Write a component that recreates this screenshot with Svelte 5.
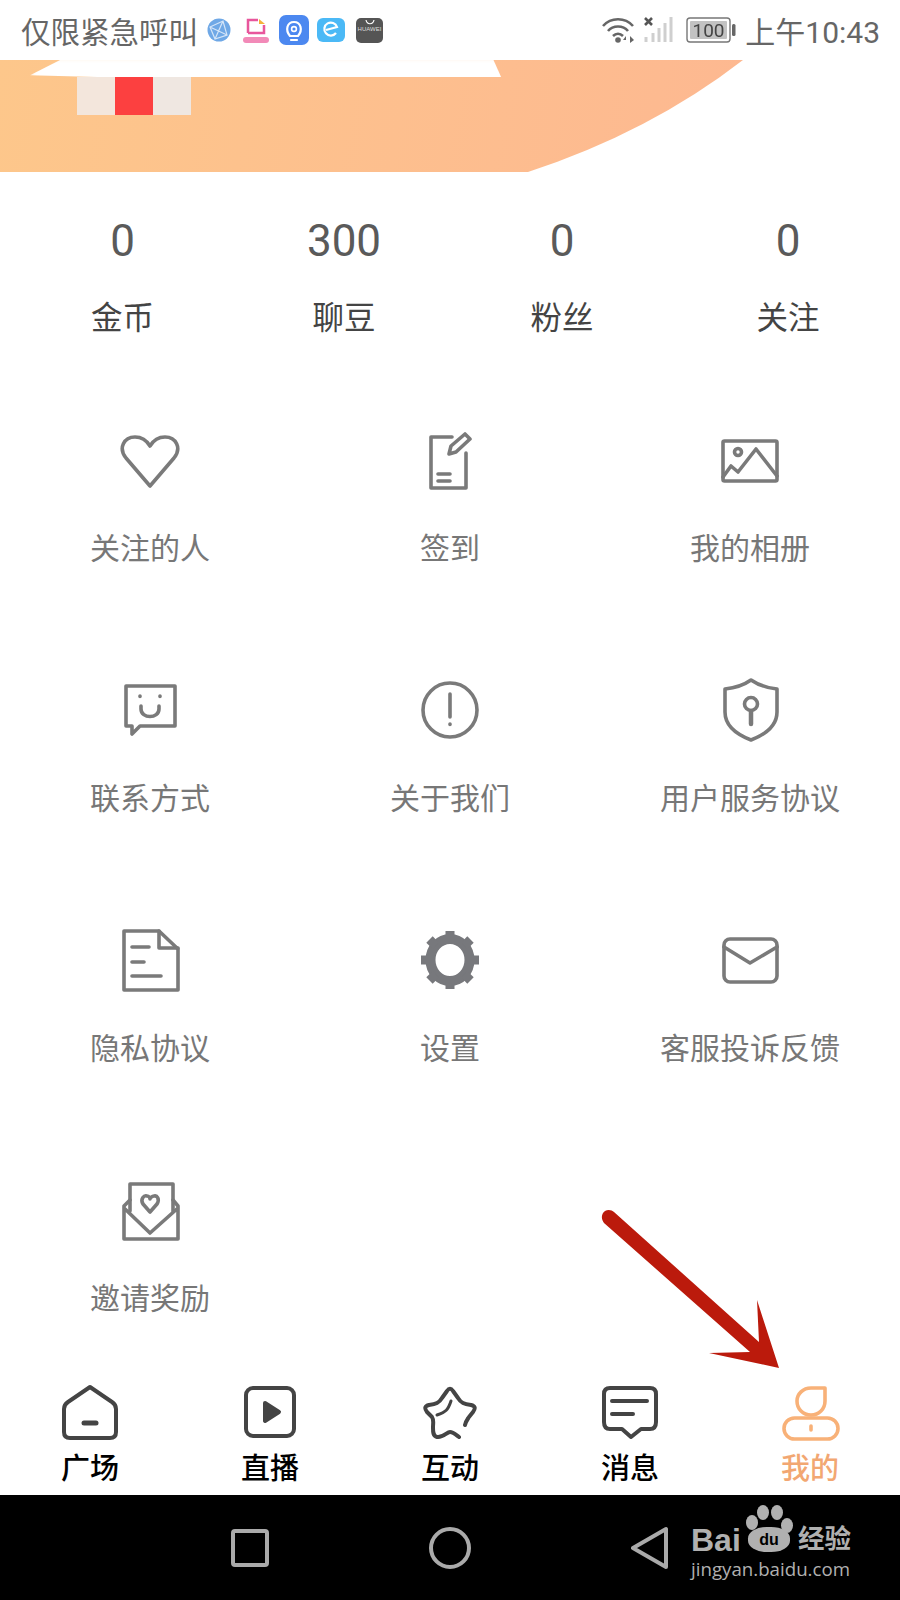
<script lang="ts">
  const stats = [
    { value: '0', label: '金币' },
    { value: '300', label: '聊豆' },
    { value: '0', label: '粉丝' },
    { value: '0', label: '关注' },
  ]
  const gearTeeth = [0, 45, 90, 135, 180, 225, 270, 315]
</script>

<div class="page">
  <header class="status">
    <div class="status-left">
      <span class="carrier">仅限紧急呼叫</span>
      <svg class="app" width="24" height="24" viewBox="0 0 24 24">
        <circle cx="12" cy="12" r="11.5" fill="#6fa8e6" />
        <path d="M3 9 L16 3 L20 17 L8 21 Z M3 9 L20 17 M16 3 L8 21" fill="none" stroke="#d4e5f8" stroke-width="1.2" />
      </svg>
      <svg class="app app-pink" width="28" height="30" viewBox="0 0 28 30">
        <path d="M6 18 V5 H16 M22 10 V18 H6" fill="none" stroke="#e8569c" stroke-width="2.5" />
        <path d="M17 4 L23 9 L17 9 Z" fill="#f5b13c" />
        <rect x="1" y="22" width="26" height="6" rx="3" fill="#f28ab8" />
      </svg>
      <svg class="app" width="30" height="30" viewBox="0 0 30 30">
        <rect width="30" height="30" rx="7" fill="#4c88f0" />
        <path d="M11 21 C6 15 8 7 15 7 C22 7 24 15 19 21 Z M12 25 H18" fill="none" stroke="#fff" stroke-width="2.2" stroke-linecap="round" />
        <circle cx="15" cy="14" r="2.4" fill="none" stroke="#fff" stroke-width="1.6" />
      </svg>
      <svg class="app" width="28" height="24" viewBox="0 0 28 24">
        <rect width="28" height="24" rx="6" fill="#4bb9f6" />
        <path d="M19 15 A6.5 6.5 0 1 1 20 9 L9 12" fill="none" stroke="#fff" stroke-width="2.2" />
      </svg>
      <div class="huawei">
        <svg width="10" height="5" viewBox="0 0 10 5"><path d="M1 0 C2 5 8 5 9 0" fill="none" stroke="#fff" stroke-width="1.2" /></svg>
        <span>HUAWEI</span>
      </div>
    </div>
    <div class="status-right">
      <svg width="34" height="30" viewBox="0 0 34 30">
        <path d="M2 11 C10 2 24 2 32 11 M7 16 C12 10 22 10 27 16 M12 21 C15 18 19 18 22 21" fill="none" stroke="#666" stroke-width="2.6" />
        <circle cx="17" cy="25" r="2.8" fill="#666" />
        <path d="M25 21 L22 25 H25 V28 M29 21 V28 L33 25 Z" fill="#666" />
      </svg>
      <svg class="signal" width="30" height="30" viewBox="0 0 30 30">
        <path d="M2 3 L9 10 M9 3 L2 10" stroke="#555" stroke-width="2.6" />
        <path d="M3 22 V27 M10 18 V27 M16 13 V27 M22 8 V27 M28 2 V27" stroke="#cfcfcf" stroke-width="3" />
      </svg>
      <svg class="battery" width="50" height="26" viewBox="0 0 50 26">
        <rect x="1" y="1" width="43" height="24" rx="3" fill="#fff" stroke="#777" stroke-width="1.4" />
        <rect x="4" y="4" width="37" height="18" rx="1" fill="#c2c2c2" />
        <rect x="46" y="7" width="3.5" height="12" rx="1.5" fill="#666" />
        <text x="22.5" y="20" text-anchor="middle" class="battery-text">100</text>
      </svg>
      <span class="time">上午10:43</span>
    </div>
  </header>

  <div class="banner">
    <div class="banner-strip"></div>
    <div class="banner-avatar">
      <span class="pale-a"></span>
      <span class="red"></span>
      <span class="pale-b"></span>
    </div>
  </div>

  <section class="stats">
    {#each stats as stat}
      <div class="stat">
        <span class="stat-value">{stat.value}</span>
        <span class="stat-label">{stat.label}</span>
      </div>
    {/each}
  </section>

  <section class="menu">
    <div class="cell">
      <svg class="icon" viewBox="0 0 64 64">
        <path d="M32 58 L8 30 C0 20 6 9 17 9 C24 9 29 13 32 18 C35 13 40 9 47 9 C58 9 64 20 56 30 Z" />
      </svg>
      <span>关注的人</span>
    </div>
    <div class="cell">
      <svg class="icon" viewBox="0 0 64 64">
        <path d="M34 9 H13 V60 H48 V25 M20 46 H32 M20 53 H32" />
        <path d="M31 26 L33 18 L47 6 L52 11 L38 24 Z" />
      </svg>
      <span>签到</span>
    </div>
    <div class="cell">
      <svg class="icon" viewBox="0 0 64 64">
        <rect x="5" y="13" width="54" height="40" rx="1.5" />
        <circle cx="20" cy="24" r="3.5" />
        <path d="M5 49 L13 38 L20 44 L38 21 L59 48" />
      </svg>
      <span>我的相册</span>
    </div>

    <div class="cell">
      <svg class="icon" viewBox="0 0 64 64">
        <path d="M8 8 H57 V48 H22 L14 56 V48 H8 Z" />
        <path d="M22 18 V18.5 M42 18 V18.5" />
        <path d="M23 28 V31 C23 41 41 41 41 31 V28" />
      </svg>
      <span>联系方式</span>
    </div>
    <div class="cell">
      <svg class="icon" viewBox="0 0 64 64">
        <circle cx="32" cy="32" r="27" />
        <path d="M32 16 V39 M32 46 V46.5" />
      </svg>
      <span>关于我们</span>
    </div>
    <div class="cell">
      <svg class="icon" viewBox="0 0 64 64">
        <path d="M33 2 C40 7 50 10 59 11 V34 C59 48 46 57 33 62 C20 57 7 48 7 34 V11 C16 10 26 7 33 2 Z" />
        <circle cx="33" cy="26" r="6.5" />
        <path d="M33 33 V46" stroke-width="4.5" />
      </svg>
      <span>用户服务协议</span>
    </div>

    <div class="cell">
      <svg class="icon" viewBox="0 0 64 64">
        <path d="M6 3 H41 L60 21 V62 H6 Z" />
        <path d="M41 3 V20 H60 M14 19 H31 M14 34 H26 M14 48 H43" />
      </svg>
      <span>隐私协议</span>
    </div>
    <div class="cell">
      <svg class="icon gear" viewBox="0 0 64 64">
        <ellipse cx="32" cy="32" rx="19.5" ry="21" />
        {#each gearTeeth as deg}
          <rect x="27.5" y="3" width="9" height="9" transform="rotate({deg} 32 32)" />
        {/each}
      </svg>
      <span>设置</span>
    </div>
    <div class="cell">
      <svg class="icon" viewBox="0 0 64 64">
        <rect x="6" y="11" width="53" height="43" rx="6" />
        <path d="M6 19 L32 35 L59 19" />
      </svg>
      <span>客服投诉反馈</span>
    </div>

    <div class="cell">
      <svg class="icon" viewBox="0 0 64 64">
        <path d="M12 33 V6 H55 V33" />
        <path d="M12 22 L6 28 V61 H60 V28 L55 22 M6 30 L32 55 L60 30" />
        <path d="M32 34 L25 26 C22 21 26 17 29 18 C31 18 32 20 32 21 C32 20 34 18 36 18 C39 17 42 21 39 26 Z" />
      </svg>
      <span>邀请奖励</span>
    </div>
  </section>

  <nav class="tabs">
    <div class="tab">
      <svg class="tab-icon" viewBox="0 0 64 64">
        <path d="M32 7 L54 22 C57 24 58 26 58 29 V52 C58 56 56 58 52 58 H12 C8 58 6 56 6 52 V29 C6 26 7 24 10 22 Z" />
        <path d="M26 43 H38" stroke-width="5" />
      </svg>
      <span>广场</span>
    </div>
    <div class="tab">
      <svg class="tab-icon" viewBox="0 0 64 64">
        <rect x="8" y="8" width="48" height="48" rx="7" />
        <path d="M27 23 L41 32 L27 41 Z" fill="#444" />
      </svg>
      <span>直播</span>
    </div>
    <div class="tab">
      <svg class="tab-icon" viewBox="0 0 64 64">
        <g transform="translate(0 2)">
          <path d="M41 55 C37 52 35 50 32 50 C29 50 25 56 19 55 C15 54 15 50 15 46 C15 40 16 38 14 35 L9 30 C6 26 7 24 11 23 C18 22 21 21 24 16 L29 9 C31 6 33 6 35 9 L40 16 C43 21 46 22 53 23 C57 24 58 26 55 30 L51 35 C49 38 48 39 47 43" />
          <path d="M19 33 C28 30 30 28 33 19" stroke-width="3" />
        </g>
      </svg>
      <span>互动</span>
    </div>
    <div class="tab">
      <svg class="tab-icon" viewBox="0 0 64 64">
        <path d="M12 8 H52 C56 8 58 10 58 14 V42 C58 47 56 49 52 49 H43 L33 57 L24 49 H12 C8 49 6 47 6 42 V14 C6 10 8 8 12 8 Z" />
        <path d="M14 21 H49 M14 34 H35" />
      </svg>
      <span>消息</span>
    </div>
    <div class="tab tab--active">
      <svg class="tab-icon" viewBox="0 0 64 64">
        <path d="M33 8 H47 V21 C47 29 41 35 33 35 C25 35 19 29 19 21 C19 14 25 8 33 8 Z" />
        <rect x="6" y="38" width="54" height="21" rx="10.5" />
        <path d="M33 46 V50" />
      </svg>
      <span>我的</span>
    </div>
  </nav>

  <footer class="navbar">
    <svg width="38" height="38" viewBox="0 0 38 38">
      <rect x="2" y="2" width="34" height="34" rx="2" />
    </svg>
    <svg width="42" height="42" viewBox="0 0 42 42">
      <circle cx="21" cy="21" r="19" />
    </svg>
    <svg width="38" height="44" viewBox="0 0 38 44">
      <path d="M2 22 L35 3 V41 Z" stroke-linejoin="round" />
    </svg>
  </footer>

  <svg class="arrow" width="900" height="1600" viewBox="0 0 900 1600">
    <path
      fill="#bb1a0c"
      d="M604 1223 C601 1219 601 1214 605 1211 C608 1209 612 1210 614 1212 L759 1342 L757 1300 L779 1368 L709 1353 L750 1352 Z"
    />
  </svg>

  <div class="watermark">
    <div class="wm-logo">
      <span class="wm-bai">Bai</span>
      <div class="wm-paw">
        <i class="toe t1"></i>
        <i class="toe t2"></i>
        <i class="toe t3"></i>
        <i class="toe t4"></i>
        <b class="paw-head">du</b>
      </div>
      <span class="wm-cn">经验</span>
    </div>
    <span class="wm-url">jingyan.baidu.com</span>
  </div>
</div>

<style>
  :global(body) {
    margin: 0;
    background: #fff;
  }

  .page {
    position: relative;
    display: flex;
    flex-direction: column;
    width: 900px;
    height: 1600px;
    overflow: hidden;
    background: #fff;
    font-family: Roboto, "Noto Sans CJK SC", sans-serif;
  }

  .status {
    display: flex;
    justify-content: space-between;
    align-items: center;
    height: 60px;
    padding: 0 20px 0 21px;
    box-sizing: border-box;
    color: #666;
  }

  .status-left,
  .status-right {
    display: flex;
    align-items: center;
  }

  .status svg {
    filter: blur(0.5px);
  }

  .carrier {
    width: 176px;
    overflow: hidden;
    white-space: nowrap;
    font-size: 29.5px;
    margin-right: 10px;
  }

  .app {
    margin-right: 8px;
  }

  .app-pink {
    margin-left: 3px;
    margin-right: 9px;
  }

  .huawei {
    display: flex;
    flex-direction: column;
    align-items: center;
    width: 27px;
    height: 25px;
    margin-left: 3px;
    border-radius: 5px;
    background: #555;
    color: #ddd;
    font-size: 6px;
    line-height: 8px;
    padding-top: 2px;
    box-sizing: border-box;
    font-family: "Liberation Sans", sans-serif;
  }

  .signal {
    margin-left: 8px;
  }

  .battery {
    margin-left: 13px;
  }

  .battery-text {
    font-size: 19px;
    fill: #444;
  }

  .time {
    margin-left: 9px;
    font-size: 30px;
  }

  .banner {
    position: relative;
    height: 112px;
    background: linear-gradient(100deg, #fdc78b 0%, #fdb592 100%);
    clip-path: path("M0 0 H743 Q650 72 528 112 H0 Z");
  }

  .banner-strip {
    position: absolute;
    left: 24px;
    top: 0;
    width: 490px;
    height: 17px;
    overflow: hidden;
  }

  .banner-strip::before {
    content: "";
    position: absolute;
    left: 6px;
    top: -4px;
    width: 476px;
    height: 32px;
    background: #fff;
    clip-path: polygon(38px 0, 97% 0, 100% 100%, 0 60%);
    filter: blur(3px);
  }

  .banner-avatar {
    position: absolute;
    left: 77px;
    top: 17px;
    display: flex;
    height: 38px;
  }

  .banner-avatar span {
    width: 38px;
  }

  .pale-a {
    background: #f3e6dc;
  }

  .red {
    background: #fc4040;
  }

  .pale-b {
    background: #efe7e1;
  }

  .stats {
    display: grid;
    grid-template-columns: 245px 198px 238px 214px;
    height: 240px;
    padding-top: 41px;
    box-sizing: border-box;
  }

  .stat {
    display: flex;
    flex-direction: column;
    align-items: center;
    gap: 30px;
  }

  .stat-value {
    font-size: 44px;
    line-height: 56px;
    color: #5a5a5a;
  }

  .stat-label {
    font-size: 31.5px;
    line-height: 40px;
    color: #444;
  }

  .menu {
    display: grid;
    grid-template-columns: repeat(3, 300px);
    grid-auto-rows: 160px;
    row-gap: 90px;
    flex: 1;
    padding-top: 16px;
  }

  .cell {
    display: flex;
    flex-direction: column;
    align-items: center;
    gap: 37px;
    font-size: 30px;
    line-height: 40px;
    color: #777;
  }

  .icon {
    width: 64px;
    height: 64px;
    fill: none;
    stroke: #7a7a7a;
    stroke-width: 3.6;
    stroke-linecap: round;
    stroke-linejoin: round;
    filter: blur(0.5px);
  }

  .gear {
    stroke: none;
    fill: #77787c;
  }

  .gear ellipse {
    fill: none;
    stroke: #77787c;
    stroke-width: 10;
  }

  .tabs {
    display: grid;
    grid-template-columns: repeat(5, 180px);
    height: 115px;
  }

  .tab {
    display: flex;
    flex-direction: column;
    align-items: center;
    gap: 6px;
    font-size: 29px;
    line-height: 38px;
    font-weight: 500;
    color: #000;
  }

  .tab-icon {
    width: 64px;
    height: 64px;
    fill: none;
    stroke: #444;
    stroke-width: 4;
    stroke-linecap: round;
    stroke-linejoin: round;
    filter: blur(0.4px);
  }

  .tab--active {
    color: #f2a772;
  }

  .tab--active .tab-icon {
    stroke: #f8b178;
    stroke-width: 3.6;
  }

  .navbar {
    display: grid;
    grid-template-columns: repeat(3, 200px);
    justify-content: center;
    align-items: center;
    justify-items: center;
    height: 105px;
    background: #000;
    fill: none;
    stroke: #aaa;
    stroke-width: 4;
  }

  .arrow {
    position: absolute;
    left: 0;
    top: 0;
    pointer-events: none;
  }

  .watermark {
    position: absolute;
    left: 691px;
    top: 1503px;
    width: 170px;
    color: #b0b0b0;
  }

  .wm-logo {
    display: flex;
    align-items: flex-end;
    height: 52px;
  }

  .wm-bai {
    width: 50px;
    font-family: "Liberation Sans", sans-serif;
    font-weight: 700;
    font-size: 32px;
    line-height: 30px;
  }

  .wm-paw {
    position: relative;
    width: 57px;
    height: 52px;
  }

  .toe {
    position: absolute;
    background: #b0b0b0;
    border-radius: 50%;
    width: 12px;
    height: 15px;
  }

  .t1 { left: 16px; top: 2px; }
  .t2 { left: 30px; top: 2px; }
  .t3 { left: 5px; top: 12px; }
  .t4 { left: 40px; top: 15px; }

  .paw-head {
    position: absolute;
    left: 7px;
    top: 24px;
    width: 42px;
    height: 25px;
    border-radius: 45%;
    background: #b0b0b0;
    color: #000;
    font: 700 16px/25px "Liberation Sans", sans-serif;
    text-align: center;
  }

  .wm-cn {
    font-family: "Noto Sans CJK SC", sans-serif;
    font-weight: 700;
    font-size: 26.5px;
    line-height: 36px;
    white-space: nowrap;
  }

  .wm-url {
    display: block;
    margin-top: 1px;
    font: 18.7px/26px "Open Sans", sans-serif;
  }
</style>
